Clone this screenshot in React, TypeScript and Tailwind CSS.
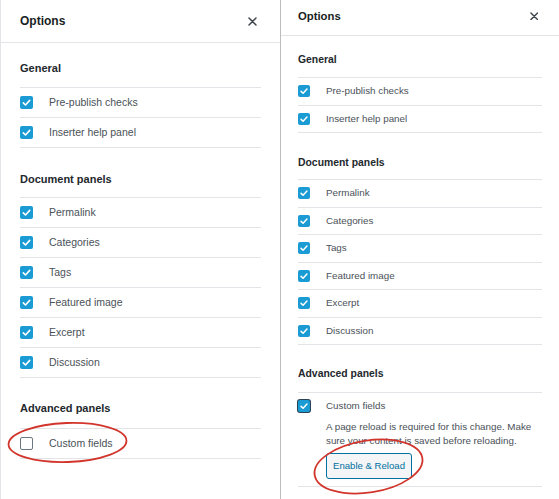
import React from "react";

type Cfg = {
  panel: string;
  header: string;
  title: string;
  xSize: number;
  pad: string;
  headingText: string;
  row: string;
  label: string;
  box: string;
  boxPx: number;
  gap: string;
};

const LEFT: Cfg = {
  panel: "w-[281px] border-l border-r border-l-[#e2e4e7] border-r-[#bcbcbc]",
  header: "h-[43px] border-b border-[#e2e4e7] pl-[19px] pr-[23px]",
  title: "text-[12px] leading-[13px]",
  xSize: 9,
  pad: "px-[19px]",
  headingText: "text-[11px] leading-[13px]",
  row: "h-[30px]",
  label: "text-[10.5px] leading-[13px]",
  box: "w-[13px] h-[13px]",
  boxPx: 13,
  gap: "mr-[16px]",
};

const RIGHT: Cfg = {
  panel: "flex-1",
  header: "h-[36px] border-b border-[#e2e4e7] pl-[17px] pr-[21px] pb-[3px]",
  title: "text-[11.3px] leading-[12px]",
  xSize: 8.5,
  pad: "px-[17px]",
  headingText: "text-[10.4px] leading-[12px]",
  row: "h-[27.5px]",
  label: "text-[9.8px] leading-[12px]",
  box: "w-[12px] h-[12px]",
  boxPx: 12,
  gap: "mr-[16px]",
};

function CheckMark({ size }: { size: number }) {
  return (
    <svg width={size} height={size} viewBox="0 0 13 13" fill="none">
      <path
        d="M3.3 6.9 L5.5 9 L9.7 4.4"
        stroke="#ffffff"
        strokeWidth="1.6"
        strokeLinecap="round"
        strokeLinejoin="round"
      />
    </svg>
  );
}

function Box({ cfg, checked, focus }: { cfg: Cfg; checked: boolean; focus?: boolean }) {
  if (!checked) {
    return (
      <span
        className={`${cfg.box} ${cfg.gap} shrink-0 rounded-[2px] border-[1.5px] border-[#6c7781] bg-white`}
      />
    );
  }
  return (
    <span
      className={`${cfg.box} ${cfg.gap} shrink-0 rounded-[2px] bg-[#1a9bd4] flex items-center justify-center ${
        focus ? "shadow-[0_0_0_1px_#2b4356]" : ""
      }`}
    >
      <CheckMark size={cfg.boxPx} />
    </span>
  );
}

function CloseX({ size }: { size: number }) {
  return (
    <svg width={size} height={size} viewBox="0 0 9 9" fill="none">
      <path d="M1 1 L8 8 M8 1 L1 8" stroke="#3d444b" strokeWidth="1.5" strokeLinecap="round" />
    </svg>
  );
}

function Row({ cfg, label, checked = true }: { cfg: Cfg; label: string; checked?: boolean }) {
  return (
    <div className={`flex items-center border-b border-[#e2e4e7] ${cfg.row}`}>
      <Box cfg={cfg} checked={checked} />
      <span className={`${cfg.label} text-[#4a5158]`}>{label}</span>
    </div>
  );
}

function Heading({ cfg, text, spacing }: { cfg: Cfg; text: string; spacing: string }) {
  return (
    <div className={`${spacing} border-b border-[#e2e4e7]`}>
      <div className={`${cfg.headingText} font-bold text-[#23282d]`}>{text}</div>
    </div>
  );
}

const DOC = ["Permalink", "Categories", "Tags", "Featured image", "Excerpt", "Discussion"];

function Header({ cfg }: { cfg: Cfg }) {
  return (
    <div className={`flex items-center justify-between ${cfg.header}`}>
      <span className={`${cfg.title} font-bold text-[#191e23]`}>Options</span>
      <CloseX size={cfg.xSize} />
    </div>
  );
}

function LeftPanel() {
  const cfg = LEFT;
  return (
    <div className={`${cfg.panel} h-full flex flex-col`}>
      <Header cfg={cfg} />
      <div className={cfg.pad}>
        <Heading cfg={cfg} text="General" spacing="pt-[19px] pb-[12px]" />
        <Row cfg={cfg} label="Pre-publish checks" />
        <Row cfg={cfg} label="Inserter help panel" />
        <Heading cfg={cfg} text="Document panels" spacing="pt-[25px] pb-[11px]" />
        {DOC.map((d) => (
          <Row key={d} cfg={cfg} label={d} />
        ))}
        <Heading cfg={cfg} text="Advanced panels" spacing="pt-[24px] pb-[13px]" />
        <Row cfg={cfg} label="Custom fields" checked={false} />
      </div>
    </div>
  );
}

function RightPanel() {
  const cfg = RIGHT;
  return (
    <div className={`${cfg.panel} h-full flex flex-col`}>
      <Header cfg={cfg} />
      <div className={cfg.pad}>
        <Heading cfg={cfg} text="General" spacing="pt-[18px] pb-[11px]" />
        <Row cfg={cfg} label="Pre-publish checks" />
        <Row cfg={cfg} label="Inserter help panel" />
        <Heading cfg={cfg} text="Document panels" spacing="pt-[24px] pb-[10px]" />
        {DOC.map((d) => (
          <Row key={d} cfg={cfg} label={d} />
        ))}
        <Heading cfg={cfg} text="Advanced panels" spacing="pt-[23px] pb-[12px]" />
        <div className="border-b border-[#e2e4e7] pb-[7px]">
          <div className="flex items-center h-[26px]">
            <Box cfg={cfg} checked focus />
            <span className={`${cfg.label} text-[#4a5158]`}>Custom fields</span>
          </div>
          <div className="pl-[28px] mt-[1px]">
            <p className="text-[9.8px] leading-[13.5px] text-[#4a5158]">
              A page reload is required for this change. Make
              <br />
              sure your content is saved before reloading.
            </p>
            <button className="mt-[6px] h-[26px] px-[6px] rounded-[3px] border border-[#0071a1] bg-[#f3f5f6] text-[#0071a1] text-[9.6px] leading-[12px]">
              Enable &amp; Reload
            </button>
          </div>
        </div>
      </div>
    </div>
  );
}

export default function App() {
  return (
    <div
      className="relative w-[559px] h-[499px] bg-white flex overflow-hidden"
      style={{ fontFamily: '"Liberation Sans", Arial, sans-serif' }}
    >
      <LeftPanel />
      <RightPanel />
      <svg
        className="absolute left-0 top-0 pointer-events-none"
        width="559"
        height="499"
        viewBox="0 0 559 499"
        fill="none"
      >
        <ellipse
          cx="67.5"
          cy="442.5"
          rx="59"
          ry="19.5"
          stroke="#d2352b"
          strokeWidth="1.8"
          transform="rotate(-2 67.5 442.5)"
        />
        <ellipse
          cx="368.5"
          cy="466.5"
          rx="54.5"
          ry="26"
          stroke="#d2352b"
          strokeWidth="1.8"
          transform="rotate(-9 368.5 466.5)"
        />
      </svg>
    </div>
  );
}
